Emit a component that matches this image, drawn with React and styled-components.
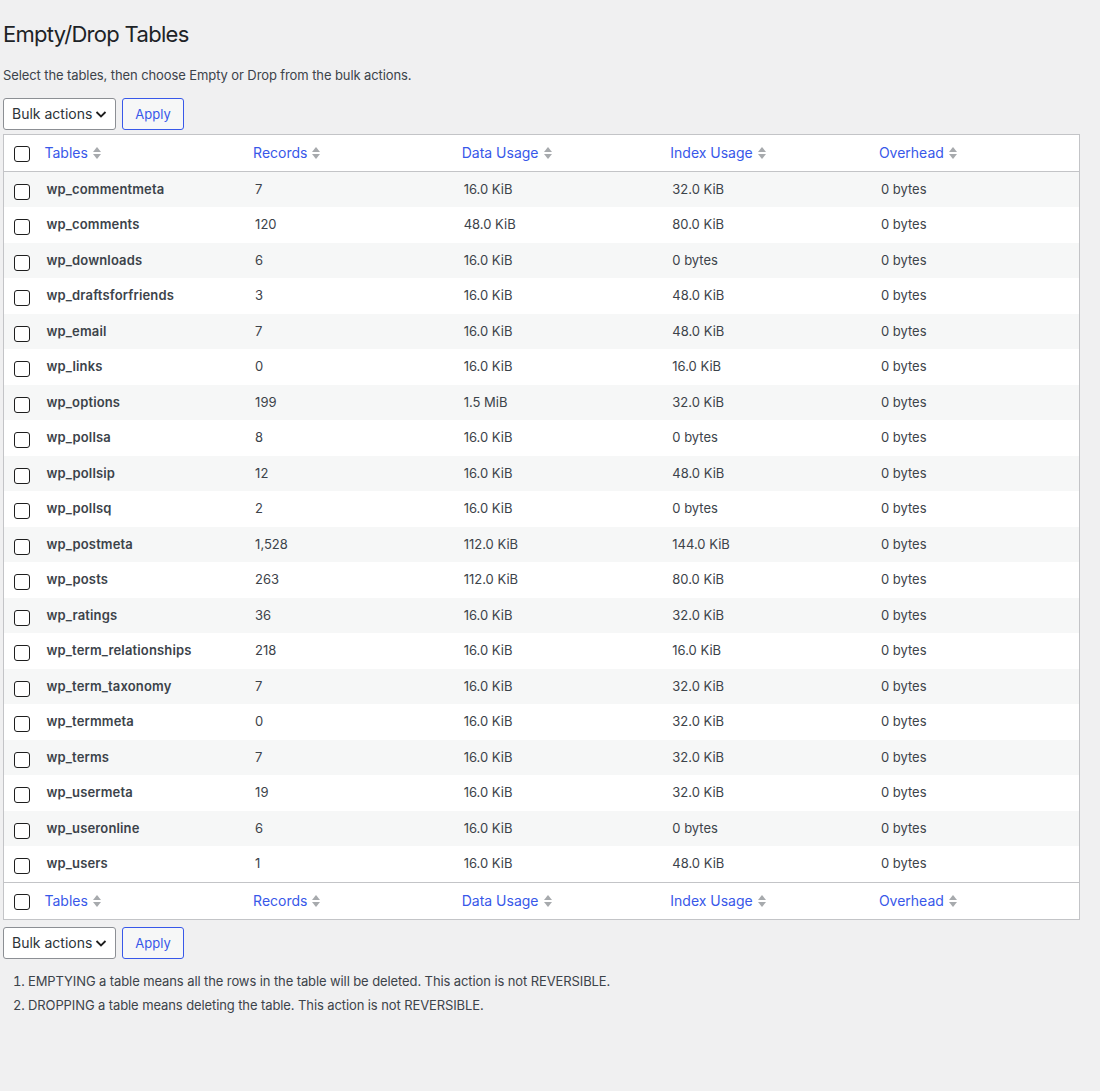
import React from "react";
import styled, { createGlobalStyle } from "styled-components";

const GlobalStyle = createGlobalStyle`
  body {
    margin: 0;
    background: #f0f0f1;
    color: #3c434a;
    font-family: Inter, "Noto Sans", "Liberation Sans", sans-serif;
    font-size: 13px;
    line-height: 1.4em;
  }
`;

const Wrap = styled.div`
  padding: 0 20px 60px 3px;
`;

const Title = styled.h1`
  margin: 0;
  padding: 19px 0 0;
  font-size: 22px;
  font-weight: 400;
  letter-spacing: -0.7px;
  line-height: 30px;
  color: #1d2327;
`;

const Intro = styled.p`
  margin: 17px 0 12px;
  line-height: 19.5px;
  letter-spacing: -0.1px;
`;

const TableNav = styled.div`
  display: flex;
  gap: 6px;
  height: 32px;
  margin: ${(p) => (p.$bottom ? "7px 0 0" : "0 0 4px")};
`;

const Select = styled.div`
  display: flex;
  align-items: center;
  gap: 2px;
  box-sizing: border-box;
  width: 113px;
  padding: 1px 0 0 8px;
  background: #fff;
  border: 1px solid #8c8f94;
  border-radius: 3px;
  color: #2c3338;
  font-size: 14px;
`;

const Button = styled.button`
  box-sizing: border-box;
  width: 62px;
  height: 32px;
  padding: 1px 0 0;
  background: #f6f7f7;
  border: 1px solid #3858e9;
  border-radius: 3px;
  color: #3858e9;
  font-family: inherit;
  font-size: 13px;
`;

const Table = styled.table`
  width: 100%;
  border-collapse: collapse;
  table-layout: fixed;
  background: #fff;
  border: 1px solid #c3c4c7;
`;

const CheckCol = styled.col`
  width: 33px;
`;

const HeadRow = styled.tr`
  height: 37px;
  border-${(p) => (p.$foot ? "top" : "bottom")}: 1px solid #c3c4c7;
`;

const Th = styled.th`
  padding: 2px 8px 0;
  text-align: left;
  font-weight: 400;
  vertical-align: middle;
`;

const SortLink = styled.span`
  display: inline-flex;
  align-items: center;
  gap: 4px;
  color: #3858e9;
  font-size: 14px;
`;

const Row = styled.tr`
  background: ${(p) => (p.$odd ? "#f6f7f7" : "#fff")};
`;

const Td = styled.td`
  padding: 8px 10px;
  line-height: 19.5px;
  vertical-align: top;
  font-weight: ${(p) => (p.$strong ? 600 : 400)};
  letter-spacing: ${(p) => (p.$strong ? "0.15px" : "0")};
  color: #3c434a;
`;

const CheckCell = styled.td`
  padding: ${(p) => (p.$head ? "0" : "12px 0 0")};
  vertical-align: ${(p) => (p.$head ? "middle" : "top")};
`;

const Box = styled.span`
  display: block;
  box-sizing: border-box;
  width: 16px;
  height: 16px;
  margin: ${(p) => (p.$head ? "2px 0 0 10px" : "0 0 0 10px")};
  background: #fff;
  border: 1px solid #1e1e1e;
  border-radius: 3px;
`;

const Notes = styled.ol`
  margin: 10px 0 0;
  padding-left: 25px;
  line-height: 24px;
  letter-spacing: -0.1px;
  color: #3c434a;
`;

const SortIcon = () => (
  <svg width="10" height="16" viewBox="0 0 10 16">
    <path d="M1 7 L5 2 L9 7 Z" fill="#a7aaad" />
    <path d="M1 9 L5 14 L9 9 Z" fill="#a7aaad" />
  </svg>
);

const Chevron = () => (
  <svg width="14" height="14" viewBox="0 0 14 14">
    <path d="M2.5 5 L7 9.5 L11.5 5" fill="none" stroke="#1e1e1e" strokeWidth="1.8" />
  </svg>
);

const columns = ["Tables", "Records", "Data Usage", "Index Usage", "Overhead"];

const rows = [
  ["wp_commentmeta", "7", "16.0 KiB", "32.0 KiB"],
  ["wp_comments", "120", "48.0 KiB", "80.0 KiB"],
  ["wp_downloads", "6", "16.0 KiB", "0 bytes"],
  ["wp_draftsforfriends", "3", "16.0 KiB", "48.0 KiB"],
  ["wp_email", "7", "16.0 KiB", "48.0 KiB"],
  ["wp_links", "0", "16.0 KiB", "16.0 KiB"],
  ["wp_options", "199", "1.5 MiB", "32.0 KiB"],
  ["wp_pollsa", "8", "16.0 KiB", "0 bytes"],
  ["wp_pollsip", "12", "16.0 KiB", "48.0 KiB"],
  ["wp_pollsq", "2", "16.0 KiB", "0 bytes"],
  ["wp_postmeta", "1,528", "112.0 KiB", "144.0 KiB"],
  ["wp_posts", "263", "112.0 KiB", "80.0 KiB"],
  ["wp_ratings", "36", "16.0 KiB", "32.0 KiB"],
  ["wp_term_relationships", "218", "16.0 KiB", "16.0 KiB"],
  ["wp_term_taxonomy", "7", "16.0 KiB", "32.0 KiB"],
  ["wp_termmeta", "0", "16.0 KiB", "32.0 KiB"],
  ["wp_terms", "7", "16.0 KiB", "32.0 KiB"],
  ["wp_usermeta", "19", "16.0 KiB", "32.0 KiB"],
  ["wp_useronline", "6", "16.0 KiB", "0 bytes"],
  ["wp_users", "1", "16.0 KiB", "48.0 KiB"],
];

const BulkBar = ({ bottom }) => (
  <TableNav $bottom={bottom}>
    <Select>
      Bulk actions
      <Chevron />
    </Select>
    <Button>Apply</Button>
  </TableNav>
);

const HeaderRow = ({ foot }) => (
  <HeadRow $foot={foot}>
    <CheckCell $head>
      <Box $head />
    </CheckCell>
    {columns.map((c) => (
      <Th key={c}>
        <SortLink>
          {c}
          <SortIcon />
        </SortLink>
      </Th>
    ))}
  </HeadRow>
);

export default function App() {
  return (
    <Wrap>
      <GlobalStyle />
      <Title>Empty/Drop Tables</Title>
      <Intro>Select the tables, then choose Empty or Drop from the bulk actions.</Intro>
      <BulkBar />
      <Table>
        <colgroup>
          <CheckCol />
          <col />
          <col />
          <col />
          <col />
          <col />
        </colgroup>
        <thead>
          <HeaderRow />
        </thead>
        <tbody>
          {rows.map((r, i) => (
            <Row key={r[0]} $odd={i % 2 === 0}>
              <CheckCell>
                <Box />
              </CheckCell>
              <Td $strong>{r[0]}</Td>
              <Td>{r[1]}</Td>
              <Td>{r[2]}</Td>
              <Td>{r[3]}</Td>
              <Td>0 bytes</Td>
            </Row>
          ))}
        </tbody>
        <tfoot>
          <HeaderRow foot />
        </tfoot>
      </Table>
      <BulkBar bottom />
      <Notes>
        <li>EMPTYING a table means all the rows in the table will be deleted. This action is not REVERSIBLE.</li>
        <li>DROPPING a table means deleting the table. This action is not REVERSIBLE.</li>
      </Notes>
    </Wrap>
  );
}
